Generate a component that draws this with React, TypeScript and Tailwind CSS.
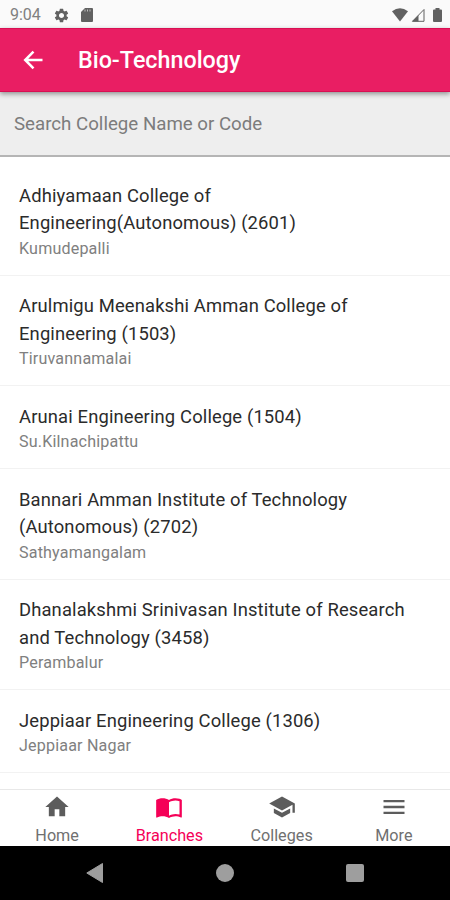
import { MdHome, MdMenu, MdSchool, MdSettings } from "react-icons/md";

const colleges = [
  { name: "Adhiyamaan College of Engineering(Autonomous) (2601)", place: "Kumudepalli" },
  { name: "Arulmigu Meenakshi Amman College of Engineering (1503)", place: "Tiruvannamalai" },
  { name: "Arunai Engineering College (1504)", place: "Su.Kilnachipattu" },
  { name: "Bannari Amman Institute of Technology (Autonomous) (2702)", place: "Sathyamangalam" },
  { name: "Dhanalakshmi Srinivasan Institute of Research and Technology (3458)", place: "Perambalur" },
  { name: "Jeppiaar Engineering College (1306)", place: "Jeppiaar Nagar" },
];

function BookIcon({ size }: { size: number }) {
  return (
    <svg width={size} height={size} viewBox="0 0 24 24" fill="currentColor">
      <path d="M21 5c-1.11-.35-2.33-.5-3.5-.5-1.95 0-4.05.4-5.5 1.5-1.45-1.1-3.55-1.5-5.5-1.5S2.450 4.900 1 6v14.650c0 .25.25.5.5.5.1 0 .15-.05.25-.05C3.100 20.450 5.050 20 6.500 20c1.950 0 4.050.4 5.500 1.500 1.350-.85 3.800-1.500 5.500-1.500 1.650 0 3.350.3 4.750 1.050.1.050.15.050.25.050.25 0 .5-.25.5-.5V6c-.6-.45-1.250-.75-2-1zm0 13.500c-1.100-.35-2.300-.5-3.500-.5-1.700 0-4.150.65-5.500 1.500V8c1.350-.85 3.800-1.500 5.500-1.500 1.200 0 2.400.15 3.500.5v11.500z" />
    </svg>
  );
}

const tabs = [
  { icon: MdHome, label: "Home" },
  { icon: BookIcon, label: "Branches", active: true },
  { icon: MdSchool, label: "Colleges" },
  { icon: MdMenu, label: "More" },
];

function StatusBar() {
  return (
    <div className="flex h-7 shrink-0 items-center bg-[#fafafa] pt-0.5 pl-[10px] pr-2 text-[#616161]">
      <span className="w-[43px] text-[16px] text-[#808080]">9:04</span>
      <MdSettings size={17} />
      <svg className="ml-[11px]" width="12" height="14" viewBox="0 0 12 14" fill="currentColor">
        <path d="M4 0h7q1 0 1 1v12q0 1-1 1H1q-1 0-1-1V4z" />
        <path d="M4 1.500v2M6.500 1.500v2M9 1.500v2" stroke="#bdbdbd" strokeWidth="1" />
      </svg>
      <div className="ml-auto flex items-center">
        <svg width="18" height="14" viewBox="0 0 18 14" fill="currentColor">
          <path d="M1 3.200Q9-2.800 17 3.200L9 13.500z" />
        </svg>
        <svg className="ml-0.5" width="14" height="14" viewBox="0 0 14 14">
          <path d="M1.500 13.300H13V1.500z" fill="none" stroke="currentColor" />
          <path d="M1 13.500h6.500V7z" fill="currentColor" />
        </svg>
        <svg className="ml-2" width="9" height="14" viewBox="0 0 9 14" fill="currentColor">
          <path d="M2.500 0h4v1.500H8q1 0 1 1V13q0 1-1 1H1q-1 0-1-1V2.500q0-1 1-1h1.500z" />
        </svg>
      </div>
    </div>
  );
}

export default function App() {
  return (
    <div className="flex h-[900px] w-[450px] flex-col overflow-hidden bg-white font-[Roboto,sans-serif]">
      <StatusBar />
      <header className="z-10 flex h-16 shrink-0 items-center border-y border-[#d80f52] bg-[#e91e63] pl-[23px] text-white shadow-[0_2px_5px_rgba(0,0,0,0.4)]">
        <svg width="20" height="20" viewBox="0 0 20 20" fill="none" stroke="currentColor" strokeWidth="2.5">
          <path d="M19.500 10H2.500M10.500 1.700 2.200 10l8.300 8.300" />
        </svg>
        <h1 className="ml-[35px] text-[23.3px] font-medium">Bio-Technology</h1>
      </header>
      <div className="flex h-[65px] shrink-0 items-center border-b-2 border-[#b5b5b5] bg-[#eeeeee] px-[14px] pt-0.5">
        <input
          className="w-full bg-transparent text-[18.7px] outline-none placeholder:text-[#7c7c7c]"
          placeholder="Search College Name or Code"
        />
      </div>
      <ul className="min-h-0 flex-1 overflow-hidden pt-2">
        {colleges.map((c) => (
          <li key={c.name} className="border-b border-[#f2f2f2] px-[19px] pt-[16.5px] pb-[15.5px]">
            <p className="text-[18.4px] leading-[27.5px] tracking-[0.14px] text-[#2b2b2b]">{c.name}</p>
            <p className="mt-px text-[16.1px] leading-[21.5px] tracking-[0.17px] text-[#808080]">{c.place}</p>
          </li>
        ))}
      </ul>
      <nav className="grid h-[57px] shrink-0 grid-cols-4 border-t border-[#e8e8e8] bg-white pl-px">
        {tabs.map((t) => (
          <button
            key={t.label}
            className={`flex flex-col items-center pt-[3px] ${t.active ? "text-[#f50057]" : "text-[#5c5c5c]"}`}
          >
            <t.icon size={28} />
            <span className={`mt-[5px] text-[16.2px] leading-[20px] ${t.active ? "" : "text-[#707070]"}`}>{t.label}</span>
          </button>
        ))}
      </nav>
      <div className="flex h-[54px] shrink-0 items-center justify-between bg-black pr-[86px] pl-[86px] text-[#9e9e9e]">
        <svg width="18" height="20" viewBox="0 0 18 20" fill="currentColor">
          <path d="M16.500.5v19L.8 10z" stroke="currentColor" strokeLinejoin="round" />
        </svg>
        <svg width="18" height="18" viewBox="0 0 18 18" fill="currentColor">
          <circle cx="9" cy="9" r="9" />
        </svg>
        <div className="size-[18px] rounded-[2px] bg-[#9e9e9e]" />
      </div>
    </div>
  );
}
